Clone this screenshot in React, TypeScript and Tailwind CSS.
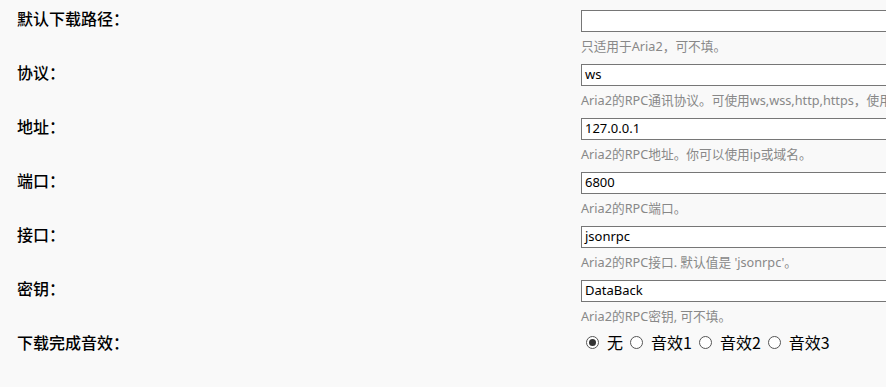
import React from "react";

const rows = [
  { label: "默认下载路径：", value: "", help: "只适用于Aria2，可不填。" },
  { label: "协议：", value: "ws", help: "Aria2的RPC通讯协议。可使用ws,wss,http,https，使用wss和https时需要证书。" },
  { label: "地址：", value: "127.0.0.1", help: "Aria2的RPC地址。你可以使用ip或域名。" },
  { label: "端口：", value: "6800", help: "Aria2的RPC端口。" },
  { label: "接口：", value: "jsonrpc", help: "Aria2的RPC接口. 默认值是 'jsonrpc'。" },
  { label: "密钥：", value: "DataBack", help: "Aria2的RPC密钥, 可不填。" },
];

function Radio({ checked, text }: { checked?: boolean; text: string }) {
  return (
    <span className="flex items-center gap-[8px]">
      <span className="flex h-[13px] w-[13px] items-center justify-center rounded-full border border-[#555] bg-white">
        {checked && <span className="h-[7px] w-[7px] rounded-full bg-[#333]" />}
      </span>
      <span className="text-[16px] leading-[16px] text-black">{text}</span>
    </span>
  );
}

export default function App() {
  return (
    <div
      className="h-[387px] w-[886px] overflow-hidden bg-[#f9f9f9] pl-[17px] pt-[10px]"
      style={{ fontFamily: '"Noto Sans", "Noto Sans CJK SC", sans-serif' }}
    >
      {rows.map((r) => (
        <div key={r.label} className="flex h-[54px]">
          <div className="w-[564px] shrink-0 text-[16px] leading-[16px] font-medium text-black" style={{ fontFamily: '"Noto Sans CJK SC", sans-serif' }}>
            {r.label}
          </div>
          <div className="w-[400px] shrink-0">
            <div className="flex h-[22px] items-center border border-[#767676] bg-white px-[3px] text-[13px] text-black">
              {r.value}
            </div>
            <div className="mt-[4px] whitespace-nowrap text-[12.7px] leading-[20px] text-[#888]">
              {r.help}
            </div>
          </div>
        </div>
      ))}
      <div className="flex">
        <div className="w-[569px] shrink-0 text-[16px] leading-[16px] font-medium text-black" style={{ fontFamily: '"Noto Sans CJK SC", sans-serif' }}>
          下载完成音效：
        </div>
        <div className="flex items-center gap-[7px]" style={{ fontFamily: '"Noto Sans CJK SC", sans-serif' }}>
          <Radio checked text="无" />
          <Radio text="音效1" />
          <Radio text="音效2" />
          <Radio text="音效3" />
        </div>
      </div>
    </div>
  );
}
